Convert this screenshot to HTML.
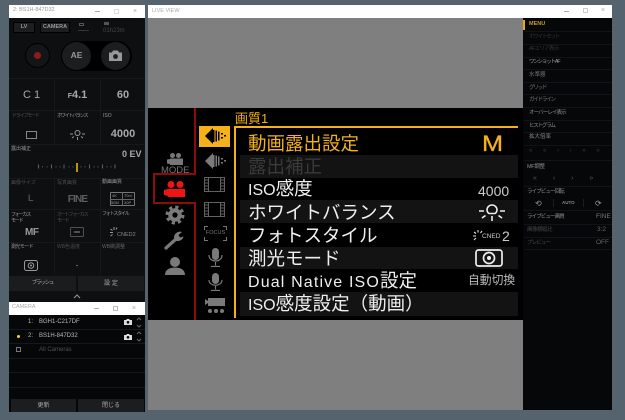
<!DOCTYPE html>
<html><head><meta charset="utf-8"><style>
html,body{margin:0;padding:0;background:#55636f}
body{width:625px;height:420px;overflow:hidden;position:relative;font-family:"Liberation Sans","Noto Sans CJK JP",sans-serif}
#w{position:absolute;left:0;top:0;width:625px;height:420px;background:#55636f;overflow:hidden;filter:blur(.3px)}
#w div,#w svg{position:absolute;box-sizing:border-box}
.t{white-space:nowrap;line-height:1}
.m{font-size:18.5px;color:#efefef;left:248px}
.m span{font-size:16px}
.r{background:#131313;left:240px;width:278px}
.s{font-size:5px;color:#999}
.d{font-size:5px;color:#4c4c4c}
.k{letter-spacing:-1.2px}
.v{font-size:11px;color:#a8a8a8;font-weight:bold;text-align:center}
.p{font-size:5.5px;color:#8a8a8a}
.pl{left:524px;width:88px;height:1px;background:#111417}
.ln{background:#17181a}
</style></head><body><div id="w">

<!-- left window -->
<div style="left:9px;top:5px;width:136px;height:13px;background:#fff"></div>
<div class="t" style="left:13px;top:8px;font-size:5.5px;color:#999">2: BS1H-847D32</div>
<div style="left:95px;top:10.5px;width:5px;height:1px;background:#aaa"></div>
<div style="left:114px;top:9px;width:5px;height:5px;border:1px solid #ddd"></div>
<div class="t" style="left:133px;top:8px;font-size:7px;color:#aaa">×</div>
<div style="left:9px;top:18px;width:136px;height:284px;background:#0e0f11"></div>

<div style="left:13px;top:22px;width:22px;height:11px;background:#1c1e20;border:1px solid #000"></div>
<div class="t" style="left:13px;top:25px;width:22px;text-align:center;font-size:5.5px;font-weight:bold;color:#999">LV</div>
<div style="left:40px;top:22px;width:30px;height:11px;background:#1c1e20;border:1px solid #000"></div>
<div class="t" style="left:40px;top:25px;width:30px;text-align:center;font-size:5.5px;font-weight:bold;color:#999">CAMERA</div>
<div style="left:79px;top:23px;width:5px;height:3px;border:1px solid #555"></div>
<div style="left:78px;top:30px;width:11px;height:1px;background:#333"></div>
<div style="left:104px;top:22px;width:5px;height:3px;background:#555"></div>
<div class="t" style="left:103px;top:28px;font-size:6px;color:#444">01h23m</div>

<div style="left:70px;top:41px;width:62px;height:30px;background:#000;border-radius:15px"></div>
<div style="left:25px;top:43px;width:25px;height:25px;border-radius:50%;background:#141517;border:1px solid #000"></div>
<div style="left:34px;top:52px;width:7px;height:7px;border-radius:50%;background:#8f1a1e"></div>
<div style="left:61px;top:41px;width:31px;height:30px;border-radius:50%;background:#1c1d1f;border:1px solid #000"></div>
<div class="t" style="left:61px;top:51px;width:31px;text-align:center;font-size:8.5px;font-weight:bold;color:#999">AE</div>
<div style="left:100px;top:41px;width:31px;height:30px;border-radius:50%;background:#1c1d1f;border:1px solid #000"></div>
<svg style="left:109px;top:50px" width="13" height="11" viewBox="0 0 13 11"><path d="M0 2.500h3l1-2h5l1 2h3V11H0z" fill="#999"/><circle cx="6.500" cy="6.500" r="2.400" fill="#1c1d1f"/></svg>

<div class="ln" style="left:9px;top:78px;width:136px;height:1px"></div>
<div class="ln" style="left:54px;top:78px;width:1px;height:66px"></div>
<div class="ln" style="left:100px;top:78px;width:1px;height:66px"></div>
<div class="ln" style="left:9px;top:110px;width:136px;height:1px"></div>
<div class="t v" style="left:9px;top:90px;width:45px;font-weight:normal">C 1</div>
<div class="t v" style="left:55px;top:90px;width:45px"><span style="font-size:7px">F</span>4.1</div>
<div class="t v" style="left:101px;top:90px;width:44px">60</div>
<div class="t d k" style="left:12px;top:114px">ドライブモード</div>
<div class="t s k" style="left:57px;top:114px">ホワイトバランス</div>
<div class="t s" style="left:103px;top:114px">ISO</div>
<div style="left:26px;top:131px;width:11px;height:8px;border:1px solid #888"></div>
<svg style="left:69px;top:128px" width="17" height="13" viewBox="0 0 17 13"><g stroke="#999" fill="none"><circle cx="8.500" cy="5" r="2.500"/><path d="M8.500 9v3M1 6h3M13 6h3M3 10l2-1.500M14 10l-2-1.500"/></g></svg>
<div class="t v" style="left:101px;top:129px;width:44px">4000</div>

<div class="ln" style="left:9px;top:144px;width:136px;height:1px"></div>
<div class="t s" style="left:11px;top:147px">露出補正</div>
<div class="t" style="left:122px;top:150px;font-size:9px;font-weight:bold;color:#aaa">0 EV</div>
<svg style="left:38px;top:163px" width="78" height="9" viewBox="0 0 78 9"><g stroke="#777" stroke-width=".8"><path d="M.5 1.500v4M13.500 1.500v4M26 1.500v4M51.500 1.500v4M64.500 1.500v4M77 1.500v4"/><path stroke="#555" d="M4.500 3v1.500M9 3v1.500M18 3v1.500M22 3v1.500M31 3v1.500M35 3v1.500M43 3v1.500M47 3v1.500M56 3v1.500M60 3v1.500M69 3v1.500M73 3v1.500"/></g></svg>
<div style="left:76px;top:163px;width:2px;height:9px;background:#b79414"></div>
<div class="ln" style="left:9px;top:178px;width:136px;height:1px"></div>

<div class="ln" style="left:54px;top:178px;width:1px;height:97px"></div>
<div class="ln" style="left:100px;top:178px;width:1px;height:97px"></div>
<div class="t d" style="left:11px;top:181px">画像サイズ</div>
<div class="t d" style="left:57px;top:181px">写真画質</div>
<div class="t s" style="left:102px;top:180px">動画画質</div>
<div class="t" style="left:28px;top:194px;font-size:9px;font-weight:bold;color:#4f4f4f">L</div>
<div class="t" style="left:55px;top:195px;width:45px;text-align:center;font-size:10px;font-weight:bold;color:#5e5e5e;letter-spacing:-.8px">FINE</div>
<div style="left:110px;top:192px;width:25px;height:14px;border:1px solid #777;border-radius:1px"></div>
<div style="left:110px;top:199px;width:25px;height:1px;background:#666"></div>
<div style="left:122px;top:192px;width:1px;height:14px;background:#666"></div>
<div class="t" style="left:112px;top:194px;font-size:4px;color:#999">4K</div>
<div class="t" style="left:124px;top:194px;font-size:4px;color:#999">70n↕</div>
<div class="t" style="left:111px;top:201px;font-size:4px;color:#999">50M</div>
<div class="t" style="left:124px;top:201px;font-size:4px;color:#999">30P</div>
<div class="ln" style="left:9px;top:209px;width:136px;height:1px"></div>
<div class="t s k" style="left:11px;top:212px;line-height:6px">フォーカス<br>モード</div>
<div class="t d k" style="left:57px;top:212px;line-height:6px">オートフォーカス<br>モード</div>
<div class="t s k" style="left:102px;top:212px">フォトスタイル</div>
<div class="t" style="left:25px;top:228px;font-size:10px;font-weight:bold;color:#999;letter-spacing:-.5px">MF</div>
<div style="left:70px;top:227px;width:14px;height:10px;border:1px solid #505050;border-radius:1px"></div>
<div style="left:74px;top:231px;width:6px;height:2px;background:#505050"></div>
<svg style="left:110px;top:227px" width="8" height="11" viewBox="0 0 8 11"><g stroke="#999" fill="none"><path d="M0 5.500h3M.5 9l2-1.500M.5 2l2 1.500M4 0v3M7 .5l-1 2"/></g></svg>
<div class="t" style="left:117px;top:233px;font-size:5.5px;color:#888">CNED2</div>
<div class="ln" style="left:9px;top:242px;width:136px;height:1px"></div>
<div class="t s k" style="left:11px;top:245px;letter-spacing:-.6px">測光モード</div>
<div class="t d" style="left:57px;top:245px">WB色温度</div>
<div class="t s" style="left:102px;top:245px;color:#666">WB微調整</div>
<svg style="left:24px;top:260px" width="14" height="11" viewBox="0 0 14 11"><g fill="none" stroke="#999"><rect x=".5" y=".5" width="13" height="10" rx="2"/><circle cx="7" cy="5.500" r="2.800"/></g><circle cx="7" cy="5.500" r="1" fill="#999"/></svg>
<div style="left:76px;top:265px;width:2px;height:1px;background:#666"></div>

<div style="left:9px;top:276px;width:67px;height:15px;background:#1b1c1e"></div>
<div style="left:78px;top:276px;width:66px;height:15px;background:#1b1c1e"></div>
<div class="t k" style="left:9px;top:281px;width:67px;text-align:center;font-size:5.5px;color:#aaa">ブラッシュ</div>
<div class="t" style="left:78px;top:281px;width:66px;text-align:center;font-size:6px;color:#aaa">設 定</div>
<svg style="left:73px;top:294px" width="8" height="5" viewBox="0 0 8 5"><path d="M1 4l3-3 3 3" fill="none" stroke="#999"/></svg>

<!-- camera window -->
<div style="left:9px;top:302px;width:136px;height:13px;background:#fff"></div>
<div class="t" style="left:12px;top:305px;font-size:5.5px;color:#aaa">CAMERA</div>
<div style="left:94px;top:308px;width:5px;height:1px;background:#aaa"></div>
<div style="left:113px;top:306px;width:5px;height:5px;border:1px solid #bbb"></div>
<div class="t" style="left:132px;top:305px;font-size:7px;color:#aaa">×</div>
<div style="left:9px;top:315px;width:136px;height:97px;background:#060709"></div>
<div class="ln" style="left:9px;top:329px;width:136px;height:1px"></div>
<div class="ln" style="left:9px;top:343px;width:136px;height:1px"></div>
<div class="ln" style="left:9px;top:358px;width:136px;height:1px"></div>
<div class="ln" style="left:9px;top:372px;width:136px;height:1px"></div>
<div class="ln" style="left:9px;top:387px;width:136px;height:1px"></div>
<div class="t" style="left:28px;top:319px;font-size:6px;color:#bbb">1:</div>
<div class="t" style="left:39px;top:319px;font-size:6px;color:#bbb">BGH1-C217DF</div>
<div class="t" style="left:28px;top:333px;font-size:6px;color:#bbb">2:</div>
<div class="t" style="left:39px;top:333px;font-size:6px;color:#bbb">BS1H-847D32</div>
<div style="left:17px;top:335px;width:3px;height:3px;border-radius:50%;background:#f5e000"></div>
<div style="left:16px;top:347px;width:5px;height:5px;border:1px solid #777"></div>
<div class="t" style="left:39px;top:347px;font-size:6px;color:#505050">All Cameras</div>
<svg style="left:124px;top:319px" width="8" height="6" viewBox="0 0 8 6"><path d="M0 1h2l1-1h2l1 1h2v5H0z" fill="#ddd"/><circle cx="4" cy="3.300" r="1.300" fill="#000"/></svg>
<svg style="left:124px;top:334px" width="8" height="6" viewBox="0 0 8 6"><path d="M0 1h2l1-1h2l1 1h2v5H0z" fill="#ddd"/><circle cx="4" cy="3.300" r="1.300" fill="#000"/></svg>
<svg style="left:136px;top:317px" width="6" height="11" viewBox="0 0 6 11"><path d="M1 3l2-2 2 2M1 8l2 2 2-2" fill="none" stroke="#666"/></svg>
<svg style="left:136px;top:331px" width="6" height="11" viewBox="0 0 6 11"><path d="M1 3l2-2 2 2M1 8l2 2 2-2" fill="none" stroke="#666"/></svg>
<div style="left:11px;top:399px;width:65px;height:13px;background:#1c1d1f"></div>
<div style="left:78px;top:399px;width:66px;height:13px;background:#1c1d1f"></div>
<div class="t" style="left:11px;top:403px;width:65px;text-align:center;font-size:6px;color:#aaa">更新</div>
<div class="t" style="left:78px;top:403px;width:66px;text-align:center;font-size:6px;color:#aaa">閉じる</div>

<!-- live view window -->
<div style="left:148px;top:5px;width:464px;height:13px;background:#fff"></div>
<div class="t" style="left:152px;top:9px;font-size:5.5px;color:#aaa">LIVE VIEW</div>
<div style="left:564px;top:10.500px;width:5px;height:1px;background:#aaa"></div>
<div style="left:583px;top:8px;width:5px;height:5px;border:1px solid #ccc"></div>
<div class="t" style="left:601px;top:7px;font-size:7px;color:#aaa">×</div>
<div style="left:148px;top:18px;width:375px;height:392px;background:#7f7f7f"></div>
<div style="left:148px;top:108px;width:375px;height:212px;background:#000"></div>

<!-- camera menu -->
<div style="left:194px;top:108px;width:2px;height:67px;background:#8d0a0d"></div>
<div style="left:153px;top:173px;width:43px;height:2px;background:#8d0a0d"></div>
<div style="left:153px;top:173px;width:2px;height:30px;background:#8d0a0d"></div>
<div style="left:153px;top:202px;width:43px;height:2px;background:#8d0a0d"></div>
<div style="left:194px;top:202px;width:2px;height:118px;background:#8d0a0d"></div>

<svg style="left:167px;top:153px" width="16" height="12" viewBox="0 0 16 12"><g fill="#777"><circle cx="5.500" cy="2.500" r="2.500"/><circle cx="11.500" cy="2.500" r="2.500"/><rect x="3" y="5.500" width="13" height="6.500"/><path d="M0 6.500l3-.5v5l-3-.5z"/></g></svg>
<div class="t" style="left:161px;top:165.500px;font-size:9.500px;color:#777">MODE</div>
<svg style="left:164px;top:181px" width="21" height="16" viewBox="0 0 21 16"><g fill="#f01414"><circle cx="7" cy="3.500" r="3.500"/><circle cx="16" cy="3.500" r="3.500"/><rect x="4" y="8" width="17" height="8"/><path d="M0 9l4-1v7l-4-1z"/></g></svg>
<svg style="left:165px;top:205px" width="20" height="20" viewBox="0 0 20 20"><circle cx="10" cy="10" r="4.700" fill="none" stroke="#7a7a7a" stroke-width="4.200"/><circle cx="10" cy="10" r="8" fill="none" stroke="#7a7a7a" stroke-width="3" stroke-dasharray="3.200 3.080"/></svg>
<svg style="left:164px;top:230px" width="21" height="20" viewBox="0 0 21 20"><path d="M2 18L12 9" stroke="#7a7a7a" stroke-width="3.200" stroke-linecap="round"/><path d="M10 8a6 6 0 0 1 8-6l-3.500 3 1.500 2.500 3.500-1a6 6 0 0 1-7 4.500z" fill="#7a7a7a"/></svg>
<svg style="left:165px;top:257px" width="20" height="18" viewBox="0 0 20 18"><circle cx="10" cy="5" r="5" fill="#7a7a7a"/><path d="M0 18c0-5 4-7.500 10-7.500s10 2.500 10 7.500z" fill="#7a7a7a"/></svg>

<div style="left:199px;top:126px;width:31px;height:21px;background:#f5b11c"></div>
<svg style="left:205px;top:127px" width="21" height="18" viewBox="0 0 21 18"><path d="M8 1v16L0 9z" fill="#000"/><g fill="#000"><rect x="8" y="3" width="1.500" height="12"/><rect x="10.500" y="3.500" width="1.500" height="11"/><rect x="13" y="4.500" width="1.500" height="9"/><rect x="16" y="6" width="2" height="1.500"/><rect x="19" y="8" width="2" height="1.500"/><rect x="16" y="10" width="2" height="1.500"/></g></svg>
<svg style="left:205px;top:152px" width="21" height="18" viewBox="0 0 21 18"><path d="M8 1v16L0 9z" fill="#7a7a7a"/><g fill="#7a7a7a"><rect x="8" y="3" width="1.500" height="12"/><rect x="10.500" y="3.500" width="1.500" height="11"/><rect x="13" y="4.500" width="1.500" height="9"/><rect x="16" y="6" width="2" height="1.500"/><rect x="19" y="8" width="2" height="1.500"/><rect x="16" y="10" width="2" height="1.500"/></g></svg>
<svg style="left:204px;top:177px" width="21" height="15" viewBox="0 0 21 15"><g fill="none" stroke="#626262"><rect x=".5" y=".5" width="20" height="14"/><path d="M4.500 .5v14M16.500 .5v14M.5 3h4M.5 6h4M.5 9h4M.5 12h4M16.500 3h4M16.500 6h4M16.500 9h4M16.500 12h4"/></g></svg>
<svg style="left:204px;top:202px" width="21" height="15" viewBox="0 0 21 15"><g fill="none" stroke="#626262"><rect x=".5" y=".5" width="20" height="14"/><path d="M4.500 .5v14M16.500 .5v14M.5 3h4M.5 6h4M.5 9h4M.5 12h4M16.500 3h4M16.500 6h4M16.500 9h4M16.500 12h4"/></g></svg>
<svg style="left:204px;top:226px" width="23" height="15" viewBox="0 0 23 15"><path d="M4 .5H.5V4M19 .5h3.500V4M4 14.500H.5V11M19 14.500h3.500V11" fill="none" stroke="#777"/></svg>
<div class="t" style="left:204px;top:231px;width:23px;text-align:center;font-size:5.500px;color:#777">FOCUS</div>
<svg style="left:208px;top:248px" width="15" height="19" viewBox="0 0 15 19"><rect x="4" y="0" width="7" height="12" rx="3.500" fill="#7a7a7a"/><path d="M1 7c0 8 13 8 13 0M7.500 14v3.500M3 18.500h9" fill="none" stroke="#7a7a7a" stroke-width="1.200"/></svg>
<svg style="left:208px;top:273px" width="15" height="18" viewBox="0 0 15 18"><rect x="4" y="0" width="7" height="11" rx="3.500" fill="#7a7a7a"/><path d="M1 7c0 7 13 7 13 0M7.500 13v3.500M3 17.500h9" fill="none" stroke="#7a7a7a" stroke-width="1.200"/></svg>
<svg style="left:205px;top:298px" width="20" height="16" viewBox="0 0 20 16"><g fill="#7a7a7a"><rect x="3" y="0" width="17" height="8"/><path d="M0 1l3 2v2L0 7z"/><circle cx="5" cy="13" r="2"/><circle cx="11" cy="13" r="2"/><circle cx="17" cy="13" r="2"/></g></svg>

<div class="t" style="left:235px;top:112px;font-size:13px;color:#f5b11c">画質1</div>
<div style="left:234px;top:126px;width:284px;height:2px;background:#f5b11c"></div>
<div style="left:234px;top:126px;width:2px;height:192px;background:#f5b11c"></div>

<div class="r" style="top:155px;height:23px"></div>
<div class="r" style="top:200px;height:23px"></div>
<div class="r" style="top:247px;height:22px"></div>
<div class="r" style="top:292px;height:24px"></div>

<div class="t m" style="top:135px;color:#f5b11c">動画露出設定</div>
<div class="t" style="left:482px;top:133px;font-size:22px;color:#f5b11c;transform:scaleX(1.15);transform-origin:0 0;-webkit-text-stroke:.3px #f5b11c">M</div>
<div class="t m" style="top:158px;color:#3a3a3a">露出補正</div>
<div class="t m" style="top:180px"><span>ISO</span>感度</div>
<div class="t" style="left:478px;top:184px;font-size:14px;color:#ccc">4000</div>
<div class="t m" style="top:204px">ホワイトバランス</div>
<svg style="left:478px;top:203px" width="28" height="18" viewBox="0 0 28 18"><g stroke="#eee" stroke-width="1.600" fill="none"><path d="M9 7a5 5 0 0 1 10 0c0 2-1.500 3.500-2.500 3.500h-5C10.500 10.500 9 9 9 7z"/><path d="M14 13v5M1 8h5M22 8h5M4 15l3.500-2.500M24 15l-3.500-2.500"/></g></svg>
<div class="t m" style="top:227px">フォトスタイル</div>
<svg style="left:473px;top:230px" width="10" height="12" viewBox="0 0 10 12"><g stroke="#ddd" stroke-width="1.100" fill="none"><path d="M0 6h3M1 10l2-2M1 2l2 1.500M5 0v2.500M9 1L7.500 3"/></g></svg>
<div class="t" style="left:482px;top:234px;font-size:6.500px;color:#ccc">CNED</div>
<div class="t" style="left:502px;top:229px;font-size:14px;color:#ccc">2</div>
<div class="t m" style="top:250px">測光モード</div>
<svg style="left:475px;top:249px" width="28" height="18" viewBox="0 0 28 18"><rect x="1" y="1" width="26" height="16" rx="2.500" fill="none" stroke="#eee" stroke-width="1.700"/><circle cx="14" cy="9" r="5.500" fill="none" stroke="#eee" stroke-width="1.700"/><circle cx="14" cy="9" r="2" fill="#eee"/></svg>
<div class="t m" style="top:272px"><span style="letter-spacing:1.15px">Dual Native ISO</span>設定</div>
<div class="t" style="left:468px;top:275px;font-size:11.800px;color:#bbb">自動切換</div>
<div class="t m" style="top:295px"><span>ISO</span>感度設定（動画）</div>

<!-- right panel -->
<div style="left:523px;top:18px;width:89px;height:392px;background:#060709"></div>
<div style="left:523px;top:20px;width:2px;height:10px;background:#e8a81c"></div>
<div class="t" style="left:529px;top:22px;font-size:5.500px;font-weight:bold;color:#c79a2a">MENU</div>
<div class="pl" style="top:31px"></div><div class="pl" style="top:44px"></div><div class="pl" style="top:57px"></div><div class="pl" style="top:69px"></div><div class="pl" style="top:82px"></div><div class="pl" style="top:94px"></div><div class="pl" style="top:107px"></div><div class="pl" style="top:120px"></div><div class="pl" style="top:132px"></div><div class="pl" style="top:145px"></div><div class="pl" style="top:160px"></div><div class="pl" style="top:186px"></div><div class="pl" style="top:210px"></div><div class="pl" style="top:224px"></div><div class="pl" style="top:237px"></div><div class="pl" style="top:249px"></div>
<div class="t p k" style="left:529px;top:35px;color:#333">ホワイトセット</div>
<div class="t p" style="left:529px;top:47px;color:#333;letter-spacing:-.7px">AFエリア表示</div>
<div class="t p k" style="left:529px;top:60px;color:#999">ワンショットAF</div>
<div class="t p" style="left:529px;top:73px;color:#777">水準器</div>
<div class="t p k" style="left:529px;top:86px;color:#777">グリッド</div>
<div class="t p k" style="left:529px;top:98px;color:#777">ガイドライン</div>
<div class="t p" style="left:529px;top:111px;letter-spacing:-.9px">オーバーレイ表示</div>
<div class="t p k" style="left:529px;top:124px">ヒストグラム</div>
<div class="t p" style="left:529px;top:135px">拡大倍率</div>
<div class="t" style="left:529px;top:148px;font-size:6px;color:#3c3c3c;word-spacing:9px">« « ‹ › » »</div>
<div class="t p" style="left:527px;top:165px;letter-spacing:-.3px">MF調整</div>
<div class="t" style="left:533px;top:175px;font-size:7px;color:#555;word-spacing:14px">« ‹ › »</div>
<div class="t p" style="left:527px;top:190px;letter-spacing:-.9px">ライブビュー回転</div>
<div style="left:553px;top:199px;width:1px;height:8px;background:#1c1d1f"></div>
<div style="left:583px;top:199px;width:1px;height:8px;background:#1c1d1f"></div>
<div class="t" style="left:535px;top:200px;font-size:8px;color:#999">⟲</div>
<div class="t" style="left:562px;top:201px;font-size:4.500px;font-weight:bold;color:#888">AUTO</div>
<div class="t" style="left:595px;top:200px;font-size:8px;color:#999">⟳</div>
<div class="t p" style="left:527px;top:215px;letter-spacing:-.9px">ライブビュー画質</div>
<div class="t" style="left:596px;top:214px;font-size:6.500px;color:#777">FINE</div>
<div class="t p" style="left:527px;top:228px;color:#444;letter-spacing:-.5px">画像横縦比</div>
<div class="t" style="left:597px;top:227px;font-size:6.500px;color:#666">3:2</div>
<div class="t p" style="left:527px;top:241px;color:#444;letter-spacing:-.9px">プレビュー</div>
<div class="t" style="left:596px;top:240px;font-size:6.500px;color:#666">OFF</div>
</div></body></html>
